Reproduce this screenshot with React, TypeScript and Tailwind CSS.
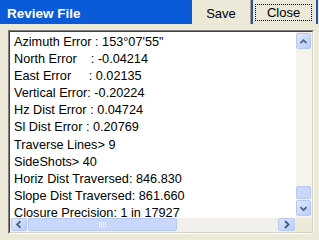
const lines = [
  'Azimuth Error : 153°07\'55"',
  'North Error    : -0.04214',
  'East Error     : 0.02135',
  'Vertical Error: -0.20224',
  'Hz Dist Error : 0.04724',
  'Sl Dist Error : 0.20769',
  'Traverse Lines> 9',
  'SideShots> 40',
  'Horiz Dist Traversed: 846.830',
  'Slope Dist Traversed: 861.660',
  'Closure Precision: 1 in 17927',
]

function Arrow({ dir }: { dir: 'up' | 'down' | 'left' | 'right' }) {
  const d = {
    up: 'M4 9.5 L7.5 6 L11 9.5',
    down: 'M4 6 L7.5 9.5 L11 6',
    left: 'M9 4 L5.5 7.5 L9 11',
    right: 'M6 4 L9.5 7.5 L6 11',
  }[dir]
  return (
    <svg width="15" height="15" viewBox="0 0 15 15">
      <path d={d} fill="none" stroke="#4d6185" strokeWidth="2" />
    </svg>
  )
}

function ScrollButton({ dir, className }: { dir: 'up' | 'down' | 'left' | 'right'; className: string }) {
  return (
    <div className={`flex items-center justify-center rounded-[2px] border border-[#b7c9f4] bg-gradient-to-br from-[#dfe8fe] to-[#b9cdfa] shrink-0 ${className}`}>
      <Arrow dir={dir} />
    </div>
  )
}

export default function App() {
  return (
    <div className="w-[319px] h-[240px] bg-[#ece9d8] flex flex-col overflow-hidden font-['Liberation_Sans',Arial,sans-serif]">
      <div className="h-[24px] flex shrink-0">
        <div className="flex-1 bg-[#0b5bd8] text-white font-bold text-[13.5px] pl-[7px] pt-[4px]">Review File</div>
        <button className="w-[59px] h-[24px] text-[13px] text-black pt-[3px] border-r border-[#a6a290]">Save</button>
        <button className="w-[67px] h-[24px] mr-[1px] text-[13px] text-black border-x-2 border-[#2758a6] pl-[2px] pr-[4px] pt-[4px] pb-[3px]">
          <div className="h-full border border-dotted border-black flex items-center justify-center pt-[1px]">Close</div>
        </button>
      </div>
      <div className="pl-[8px] pt-[6px]">
        <div className="w-[306px] h-[204px] border border-t-[#808080] border-l-[#808080] border-b-white border-r-white">
          <div className="h-full flex flex-col border border-t-[#404040] border-l-[#404040] border-b-[#d4d0c8] border-r-[#d4d0c8] bg-white">
            <div className="h-[186px] flex shrink-0">
              <div className="flex-1 pl-[4px] pt-[2px] overflow-hidden text-[12.7px] leading-[17.1px] text-black whitespace-pre">
                {lines.map((l) => (
                  <div key={l}>{l}</div>
                ))}
              </div>
              <div className="w-[16px] bg-[#f4f3ee] flex flex-col pt-[1px] pb-[2px] pr-[1px]">
                <ScrollButton dir="up" className="h-[16px]" />
                <div className="flex-1" />
                <div className="h-[13px] rounded-[2px] border border-[#b7c9f4] bg-[#c8d7fb] mb-[1px]" />
                <ScrollButton dir="down" className="h-[16px]" />
              </div>
            </div>
            <div className="h-[14px] flex shrink-0">
              <div className="flex-1 bg-[#f1f0ea] flex items-stretch pl-[1px] pr-[1px] pb-[1px]">
                <ScrollButton dir="left" className="w-[16px]" />
                <div className="w-[149px] ml-[1px] rounded-[2px] border border-[#b7c9f4] bg-[#c8d7fb] flex items-center justify-center gap-[1px]">
                  {[0, 1, 2, 3].map((i) => (
                    <div key={i} className="w-[1px] h-[6px] bg-[#eef3fe]" />
                  ))}
                </div>
                <div className="flex-1" />
                <ScrollButton dir="right" className="w-[17px]" />
              </div>
              <div className="w-[16px] bg-[#ece9d8]" />
            </div>
          </div>
        </div>
      </div>
    </div>
  )
}
